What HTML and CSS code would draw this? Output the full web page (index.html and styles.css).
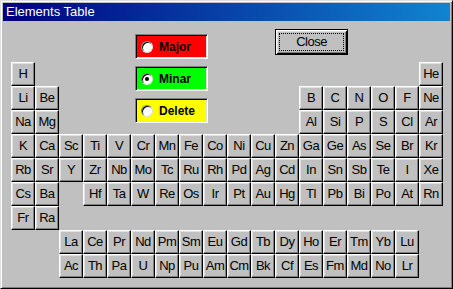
FILE: index.html
```html
<!DOCTYPE html>
<html lang="en">
<head>
    <meta charset="UTF-8">
    <title>Elements Table</title>
    <link rel="stylesheet" href="styles.css">
</head>
<body>
    <div class="window">
        <div class="title-bar">Elements Table</div>
        <div class="client" id="client">
            <div class="choices">
                <label class="choice major"><span class="radio"></span>Major</label>
                <label class="choice minar"><span class="radio checked"></span>Minar</label>
                <label class="choice delete"><span class="radio"></span>Delete</label>
            </div>
            <button class="close-button"><span class="focus">Close</span></button>
        </div>
    </div>

    <script>
        // one string per row of the table, "." is an empty cell
        const ROWS = [
            'H . . . . . . . . . . . . . . . . He',
            'Li Be . . . . . . . . . . B C N O F Ne',
            'Na Mg . . . . . . . . . . Al Si P S Cl Ar',
            'K Ca Sc Ti V Cr Mn Fe Co Ni Cu Zn Ga Ge As Se Br Kr',
            'Rb Sr Y Zr Nb Mo Tc Ru Rh Pd Ag Cd In Sn Sb Te I Xe',
            'Cs Ba . Hf Ta W Re Os Ir Pt Au Hg Tl Pb Bi Po At Rn',
            'Fr Ra',
            '. . La Ce Pr Nd Pm Sm Eu Gd Tb Dy Ho Er Tm Yb Lu',
            '. . Ac Th Pa U Np Pu Am Cm Bk Cf Es Fm Md No Lr'
        ];

        const client = document.getElementById('client');
        ROWS.forEach((row, r) => {
            row.split(' ').forEach((symbol, c) => {
                if (symbol === '.') return;
                const btn = document.createElement('button');
                btn.className = 'element';
                btn.textContent = symbol;
                btn.style.gridRow = r + 2;
                btn.style.gridColumn = c + 1;
                client.appendChild(btn);
            });
        });
    </script>
</body>
</html>
```

FILE: styles.css
```css
html, body {
    margin: 0;
    padding: 0;
    background: #c0c0c0;
}
body {
    font-family: 'Liberation Sans', Arial, sans-serif;
    font-size: 12px;
}
.window {
    box-sizing: border-box;
    width: 453px;
    height: 289px;
    padding: 2px;
    background: #c0c0c0;
    border: 1px solid;
    border-color: #dfdfdf #000 #000 #dfdfdf;
    box-shadow: inset 1px 1px #fff, inset -1px -1px #808080;
}
.title-bar {
    height: 18px;
    line-height: 18px;
    padding-left: 3px;
    color: #fff;
    font-size: 13px;
    background: linear-gradient(to right, #000080, #1084d0);
}
.client {
    display: grid;
    grid-template-columns: repeat(18, 24px);
    grid-template-rows: 41px repeat(9, 24px);
    padding-left: 8px;
}
.element {
    box-sizing: border-box;
    width: 24px;
    height: 24px;
    margin: 0;
    padding: 0 0 1px 0;
    font-family: inherit;
    font-size: 13px;
    letter-spacing: -0.5px;
    color: #000;
    background: #c0c0c0;
    border: 1px solid;
    border-color: #fff #000 #000 #fff;
    box-shadow: inset -1px -1px #808080, inset 1px 1px #dfdfdf;
}
.choices {
    grid-column: 6 / span 4;
    grid-row: 1 / span 4;
    align-self: start;
    display: flex;
    flex-direction: column;
    gap: 7px;
    margin: 13px 0 0 4px;
    z-index: 1;
}
.choice {
    box-sizing: border-box;
    display: flex;
    align-items: center;
    width: 73px;
    height: 25px;
    padding-left: 5px;
    font-weight: bold;
    border: 1px solid;
    border-color: #808080 #fff #fff #808080;
    box-shadow: inset 1px 1px #000, inset -1px -1px #dfdfdf;
}
.major { background: #ff0000; }
.minar { background: #00ff00; }
.delete { background: #ffff00; }
.radio {
    box-sizing: border-box;
    position: relative;
    width: 12px;
    height: 12px;
    margin-right: 6px;
    border-radius: 50%;
    background: #fff;
    border: 1px solid;
    border-color: #808080 #dfdfdf #dfdfdf #808080;
    box-shadow: inset 1px 1px #000;
}
.radio.checked::after {
    content: '';
    position: absolute;
    left: 3px;
    top: 3px;
    width: 4px;
    height: 4px;
    border-radius: 50%;
    background: #000;
}
.close-button {
    grid-column: 12 / span 4;
    grid-row: 1;
    align-self: start;
    box-sizing: border-box;
    width: 73px;
    height: 26px;
    margin-top: 8px;
    padding: 3px;
    font-family: inherit;
    font-size: 13px;
    letter-spacing: -0.5px;
    color: #000;
    background: #c0c0c0;
    border: 1px solid #000;
    box-shadow: inset 1px 1px #fff, inset -1px -1px #000, inset 2px 2px #dfdfdf, inset -2px -2px #808080;
}
.close-button .focus {
    display: block;
    height: 100%;
    line-height: 16px;
    box-sizing: border-box;
    border: 1px dotted #000;
}
```
